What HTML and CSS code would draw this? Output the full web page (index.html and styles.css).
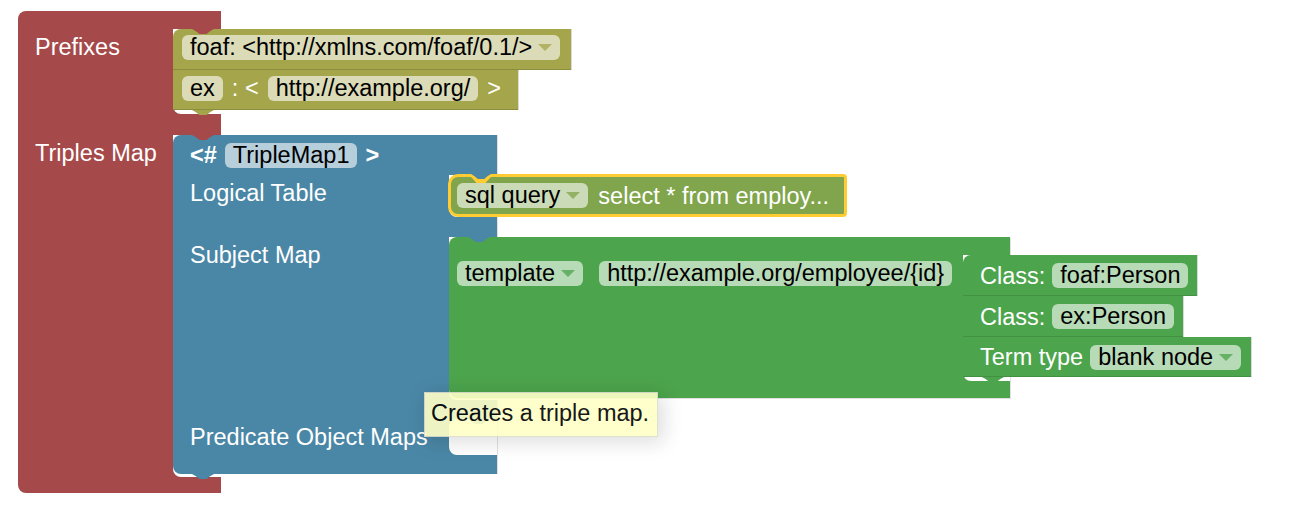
FILE: index.html
```html
<!DOCTYPE html>
<html lang="en">
<head>
  <meta charset="UTF-8">
  <meta name="viewport" content="width=device-width, initial-scale=1.0">
  <title>Triples Map</title>
  <link rel="stylesheet" href="styles.css">
</head>
<body>
  <div class="canvas">
    <div class="blk red">
      <div class="bar top"></div>
      <div class="row">
        <div class="label">Prefixes</div>
        <div class="stmt prefixes">
          <div class="blk olive stacked notch tab first prefix-foaf">
            <span class="pill">foaf: &lt;http://xmlns.com/foaf/0.1/&gt;<svg class="arrow" viewBox="0 0 14 7"><path d="M0 0H14L7 7Z"/></svg></span>
          </div>
          <div class="blk olive stacked notch tab prefix-ex">
            <span class="pill">ex</span>
            <span class="text">: &lt;</span>
            <span class="pill">http://example.org/</span>
            <span class="text">&gt;</span>
          </div>
        </div>
      </div>
      <div class="bar mid"></div>
      <div class="row">
        <div class="label">Triples Map</div>
        <div class="stmt triples">
          <div class="blk blue notch tab">
            <div class="head">
              <span class="bold">&lt;#</span>
              <span class="pill">TripleMap1</span>
              <span class="bold">&gt;</span>
            </div>
            <div class="row">
              <div class="label">Logical Table</div>
              <div class="stmt logical">
                <div class="blk sql selected">
                  <span class="pill">sql query<svg class="arrow" viewBox="0 0 14 7"><path d="M0 0H14L7 7Z"/></svg></span>
                  <span class="text">select * from employ...</span>
                </div>
              </div>
            </div>
            <div class="bar gap1"></div>
            <div class="row">
              <div class="label">Subject Map</div>
              <div class="stmt subject">
                <div class="blk green notch">
                  <div class="bar top"></div>
                  <div class="row">
                    <div class="fields">
                      <span class="pill">template<svg class="arrow" viewBox="0 0 14 7"><path d="M0 0H14L7 7Z"/></svg></span>
                      <span class="pill">http://example.org/employee/{id}</span>
                    </div>
                    <div class="stmt classes">
                      <div class="blk cls stacked notch tab class-foaf">
                        <span class="text">Class:</span>
                        <span class="pill">foaf:Person</span>
                      </div>
                      <div class="blk cls stacked notch tab class-ex">
                        <span class="text">Class:</span>
                        <span class="pill">ex:Person</span>
                      </div>
                      <div class="blk cls stacked notch tab term-type">
                        <span class="text">Term type</span>
                        <span class="pill">blank node<svg class="arrow" viewBox="0 0 14 7"><path d="M0 0H14L7 7Z"/></svg></span>
                      </div>
                    </div>
                  </div>
                  <div class="bar bottom"></div>
                </div>
              </div>
            </div>
            <div class="bar gap2"></div>
            <div class="row">
              <div class="label">Predicate Object Maps</div>
              <div class="stmt empty"></div>
            </div>
            <div class="bar bottom"></div>
          </div>
        </div>
      </div>
      <div class="bar bottom"></div>
    </div>

    <div class="tooltip">Creates a triple map.</div>
  </div>
</body>
</html>
```

FILE: styles.css
```css
:root { --red:#a5494a; --olive:#a5a54b; --blue:#4a87a6; --green:#4ca44c; --sql:#80a54c; }

body { margin:0; background:#fff; overflow:hidden;
       font-family:"Liberation Sans", Arial, sans-serif; font-size:23.5px; color:#fff; }
.canvas { position:relative; padding:11px 0 0 18px; }

/* blocks */
.blk { position:relative; display:flex; box-sizing:border-box; background:var(--c); }
.bar { height:18px; }
.row { display:flex; }
.label { flex:none; box-sizing:border-box; padding:4px 0 0 17px; line-height:28px; white-space:nowrap; }
.stmt { flex:1; min-width:0; background:#fff; border-radius:0 0 0 8px; }
.stmt > .blk { flex:none; }
.text { white-space:nowrap; line-height:28px; }
.bold { font-weight:bold; }

/* puzzle notches */
.notch::before, .tab::after, .stmt.empty::before {
  content:''; position:absolute; left:19px; width:22px; height:5px;
  clip-path:polygon(0 0, 100% 0, 82% 45%, 66% 100%, 34% 100%, 18% 45%); }
.notch::before { top:0; background:var(--up); }
.tab::after { top:100%; background:var(--c); z-index:1; }

/* fields */
.pill { display:flex; align-items:center; gap:6px; height:25px; line-height:25px; padding:0 8px;
        border-radius:6px; background:rgba(255,255,255,.6); color:#000; white-space:nowrap; }
.arrow { width:14px; height:7px; fill:var(--c); opacity:.75; }

/* red container */
.red { --c:var(--red); width:203px; flex-direction:column; border-radius:8px 0 0 8px; }
.red > .row > .label { width:155px; }
.red > .bar.mid { height:21px; }
.red > .bar.bottom { height:16px; border-radius:0 0 0 8px; }
.stmt.prefixes { padding-bottom:4px; }
.stmt.triples { padding-bottom:3px; }

/* prefix blocks */
.stacked { align-items:center; height:41px; }
.stacked:last-child { height:40px; }
.olive { --c:var(--olive); --up:var(--olive); gap:9px; padding:0 0 4px 9px;
         box-shadow:inset 0 -1px 0 rgba(0,0,0,.14), 1px 0 0 rgba(0,0,0,.15); }
.olive.first { --up:var(--red); border-radius:8px 0 0 0; }
.prefix-foaf { width:398px; }
.prefix-ex { width:345px; }

/* triples map */
.blue { --c:var(--blue); --up:var(--red); width:324px; flex-direction:column; border-radius:8px 0 0 8px;
        box-shadow:1px 0 0 rgba(0,0,0,.12); }
.head { display:flex; align-items:center; gap:8px; height:40px; padding-left:17px; }
.blue > .row > .label { width:276px; }
.blue > .bar.gap1 { height:20px; }
.blue > .bar.gap2 { height:19px; }
.blue > .bar.bottom { height:19px; }
.stmt.subject { padding-bottom:2px; }
.stmt.empty { position:relative; height:36px; border-radius:8px 0 0 8px; }
.stmt.empty::before { top:0; background:var(--blue); }

/* logical table */
.sql { --c:var(--sql); --up:var(--blue); width:399px; height:43px; margin:-1px 0 0 -1px;
       align-items:center; gap:10px; padding-left:6px;
       border:3px solid #fc3; border-radius:10px 4px 4px 10px; }
.sql::before, .sql::after { content:''; position:absolute; top:-3px;
       clip-path:polygon(0 0, 100% 0, 82% 45%, 66% 100%, 34% 100%, 18% 45%); }
.sql::before { left:16px; width:28px; height:9px; background:#fc3; }
.sql::after { left:20px; width:20px; height:5px; background:var(--blue); }

/* subject map */
.green { --c:var(--green); --up:var(--blue); width:561px; flex-direction:column; border-radius:8px 0 0 8px;
         box-shadow:1px 1px 0 rgba(0,0,0,.12); }
.green > .bar.bottom { height:17px; }
.fields { width:514px; box-sizing:border-box; display:flex; align-items:flex-start; gap:16px; padding:6px 0 0 8px; }
.stmt.classes { padding-bottom:4px; }
.cls { --c:var(--green); --up:var(--green); gap:7px; padding-left:17px;
       box-shadow:inset 0 -1px 0 rgba(0,0,0,.12), 1px 0 0 rgba(0,0,0,.15); }
.class-foaf { width:234px; border-radius:8px 0 0 0; }
.class-ex { width:220px; }
.term-type { width:288px; }

/* tooltip */
.tooltip { position:absolute; left:424px; top:392px; box-sizing:border-box; width:234px; height:45px;
           padding:6px 0 0 6px; background:#ffffc7; border:1px solid #ddc; opacity:.9; color:#000;
           box-shadow:4px 4px 20px 1px rgba(0,0,0,.15); line-height:28px; white-space:nowrap; z-index:5; }
```
